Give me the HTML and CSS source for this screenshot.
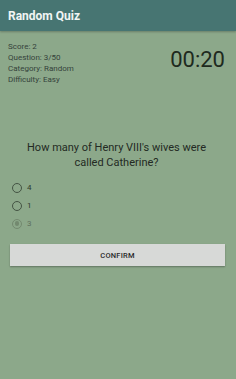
FILE: index.html
```html
<!DOCTYPE html>
<html>
<head>
<meta charset="utf-8">
<link rel="stylesheet" href="styles.css">
</head>
<body>
<div class="toolbar">Random Quiz</div>
<div class="content">
  <div class="top">
    <div class="info">
      <div>Score: 2</div>
      <div>Question: 3/50</div>
      <div>Category: Random</div>
      <div>Difficulty: Easy</div>
    </div>
    <div class="timer">00:20</div>
  </div>
  <div class="question">How many of Henry VIII's wives were called Catherine?</div>
  <div class="options">
    <div class="opt"><span class="radio"></span><span>4</span></div>
    <div class="opt"><span class="radio"></span><span>1</span></div>
    <div class="opt checked"><span class="radio"><span class="dot"></span></span><span>3</span></div>
  </div>
  <div class="btn">CONFIRM</div>
</div>
</body>
</html>
```
FILE: styles.css
```css
html, body { margin: 0; padding: 0; }
body {
  width: 236px; height: 379px; overflow: hidden;
  background: #8ca88a;
  font-family: Roboto, "Noto Sans", sans-serif;
  color: #222;
}
.toolbar {
  height: 31px; background: #477572; color: #f2f5f4;
  font-weight: 700; font-size: 12px;
  display: flex; align-items: center; padding-left: 8px;
  box-shadow: 0 1px 2px rgba(0,0,0,0.25);
}
.content { padding: 10px 11px 0 8px; }
.top { display: flex; justify-content: space-between; align-items: flex-start; }
.info { font-size: 8px; line-height: 11px; color: #34423a; }
.timer { font-size: 22px; line-height: 24px; color: #1e2a1e; margin-top: 7px; }
.question {
  margin-top: 55px; text-align: center; font-size: 11px; line-height: 15px;
  color: #232a23; padding: 0 10px;
}
.options { margin-top: 12px; padding-left: 4px; display: flex; flex-direction: column; gap: 7px; }
.opt { display: flex; align-items: center; font-size: 8px; color: #2e3a2e; height: 11px; }
.radio {
  width: 8px; height: 8px; border: 1.3px solid #445444; border-radius: 50%;
  margin-right: 5px; display: flex; align-items: center; justify-content: center;
}
.checked { color: #5e705e; }
.checked .radio { border-color: #73896f; }
.dot { width: 4.5px; height: 4.5px; border-radius: 50%; background: #73896f; }
.btn {
  margin-top: 15px; margin-left: 2px; height: 22px; background: #d7d9d7;
  box-shadow: 0 1px 1.5px rgba(0,0,0,0.3);
  display: flex; align-items: center; justify-content: center;
  font-size: 7.5px; font-weight: 500; color: #2a2a2a; letter-spacing: 0.2px;
}
```
